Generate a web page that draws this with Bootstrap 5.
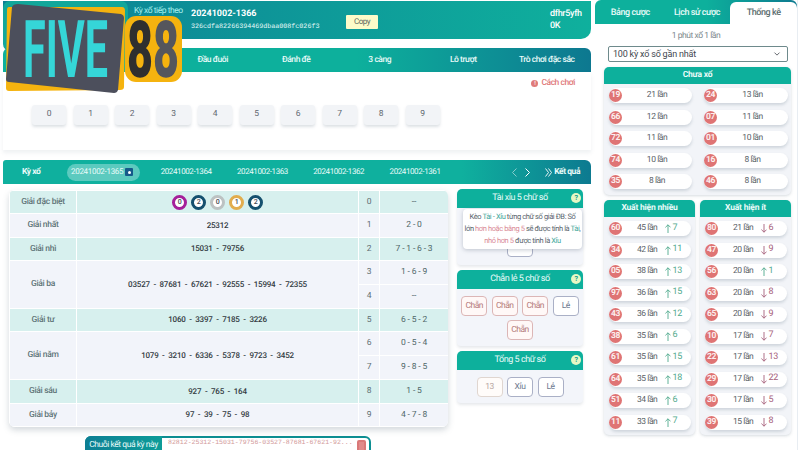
<!DOCTYPE html>
<html lang="vi">
<head>
  <meta charset="UTF-8" />
  <meta name="viewport" content="width=device-width, initial-scale=1" />
  <title>Five88 Xổ số</title>
  <link href="https://cdn.jsdelivr.net/npm/bootstrap@5.3.3/dist/css/bootstrap.min.css" rel="stylesheet" />
  <style>
    html, body { height: 450px; overflow: hidden; }
    body { font-family: Roboto, "Liberation Sans", sans-serif; font-size: 8.5px; letter-spacing: -.45px; text-rendering: geometricPrecision; color: #4c5660; background: #fff; position: relative; }
    .khung-trai { width: 588px; margin-left: 3px; padding-top: 1px; }
    .khung-phai { width: 203px; margin-left: 4px; border-right: 1px solid #e8edf2; height: 450px; }

    .ky-tiep { height: 38px; border-radius: 0 0 10px 10px; background: linear-gradient(90deg, #0d7f94, #0fb09d); color: #fff; padding-left: 131px; }
    .ky-nhan { width: 57px; color: #a8f0ee; }
    .ky-ma { font-weight: 700; font-size: 9px; line-height: 13px; letter-spacing: 0; }
    .ky-hash { font-family: "Liberation Mono", monospace; font-size: 6.7px; line-height: 12px; letter-spacing: 0; color: #e6fbfa; width: 155px; }
    .nut-copy { width: 32px; height: 14px; line-height: 14px; background: #fdfbc9; color: #5c6a5e; font-size: 8px; border-radius: 1px; text-align: center; margin-top: 3px; }
    .ky-user { width: 41px; font-weight: 500; line-height: 12px; font-size: 9px; letter-spacing: -.3px; }

    .thanh-tab { height: 24px; margin-top: 9px; padding-left: 1px; background: linear-gradient(90deg, #0db09c 60%, #0d7890); border-radius: 6px 6px 0 0; color: #e9fbf9; }
    .thanh-tab > div { width: 83.5px; text-align: center; font-weight: 500; }
    .vung-so { height: 78px; box-shadow: 0 3px 4px rgba(120, 140, 160, .12); }
    .cach-choi { height: 22px; padding-right: 16px; color: #e07a7a; font-weight: 500; gap: 3px; }
    .dot-do { width: 7px; height: 7px; border-radius: 50%; background: #e07a7a; color: #fff; font-size: 6px; line-height: 7px; text-align: center; }
    .hang-so { padding: 11px 0 0 29px; gap: 7.5px; }
    .o-so { width: 34px; height: 20px; line-height: 19px; text-align: center; background: #f2f4f7; border-radius: 3px; box-shadow: 0 2px 3px rgba(120, 135, 150, .25); color: #5f6770; }

    .thanh-ky { height: 24px; margin-top: 10px; background: linear-gradient(90deg, #0fb09e 78%, #0d7a90); color: #e9fbf9; border-radius: 3px 6px 0 0; position: relative; }
    .thanh-ky .ten-ky { width: 64px; padding-left: 19px; font-weight: 700; }
    .ky-chon { width: 73px; height: 17px; border-radius: 9px; background: #5ccabf; padding-left: 4px; gap: 2px; white-space: nowrap; font-size: 8px; letter-spacing: -.3px; }
    .vuong-xanh { width: 8px; height: 8px; background: #155a8a; border-radius: 1px; display: flex; align-items: center; justify-content: center; }
    .vuong-xanh i { width: 3px; height: 3px; background: #fff; border-radius: 50%; }
    .ky-khac { width: 76.3px; text-align: center; white-space: nowrap; font-size: 8px; letter-spacing: -.4px; }
    .mui-ten { margin-left: 59px; width: 33px; gap: 8px; }
    .ket-qua { font-weight: 700; gap: 2px; }

    .kq-wrap { width: 439px; margin: 6px 0 0 6px; border-radius: 6px; overflow: hidden; box-shadow: 0 3px 6px rgba(110, 125, 140, .3); align-self: flex-start; }
    .kq-table { table-layout: fixed; border-collapse: collapse; font-size: 8.5px; }
    .kq-table td { padding: 0; text-align: center; vertical-align: middle; background: #f2f4fa; color: #3f4850; border: 1px solid #fff; }
    .kq-table tr.hang-dam td { background: #d7f0ee; }
    .kq-table td.o-nhan { color: #5f7478; font-weight: 500; letter-spacing: -.3px; }
    .kq-table td.o-giai { font-weight: 500; font-size: 8px; letter-spacing: -.2px; color: #333b42; }
    .kq-table td.o-dau { color: #5f6e72; }
    .kq-table td.o-duoi { color: #4f6668; letter-spacing: -.15px; }
    .bi { display: inline-block; width: 15px; height: 15px; border-radius: 50%; border: 3px solid #15506e; background: #fff; line-height: 9px; font-size: 7px; font-weight: 500; margin: 0 2px; vertical-align: middle; }
    .bi-tim { border-color: #a5209a; }
    .bi-xam { border-color: #bcc2c2; }
    .bi-vang { border-color: #e2ad4e; }

    .cot-phu { width: 126px; margin: 5px 0 0 9px; gap: 5px; }
    .hop-phu { background: #f3f5fa; border-radius: 6px 6px 4px 4px; box-shadow: 0 2px 3px rgba(120, 135, 150, .18); position: relative; }
    .dau-phu { height: 19px; background: #0db09c; color: #e9fbf9; border-radius: 5px 5px 0 0; font-size: 9px; position: relative; }
    .hoi { position: absolute; right: 2px; top: 4px; width: 10px; height: 10px; border-radius: 50%; background: #e6f8c4; color: #0d9c8c; font-size: 7px; line-height: 10px; text-align: center; font-weight: 700; }
    .than-phu { padding: 7px 4px; gap: 4px 4.5px; }
    .the { width: 26px; height: 20px; line-height: 18px; text-align: center; background: #fff; border: 1px solid #aab0c6; border-radius: 4px; color: #6e7a90; }
    .the-do { border-color: #dcb6b6; color: #b47a7a; background: #fff8f7; }
    .the-nhat { border-color: #e0d6d0; color: #b9a8a4; background: #fffcfa; }
    .the-khuat { height: 12px; margin-top: 37px; }
    .chu-thich { position: absolute; left: 6px; top: 20px; width: 119px; height: 40px; background: #fff; border-radius: 4px; box-shadow: 0 1px 4px rgba(90, 100, 120, .35); text-align: center; font-size: 7.5px; line-height: 12px; padding: 2px 0; letter-spacing: -.4px; color: #59646c; white-space: nowrap; }
    .chu-thich .xanh { color: #3fa79a; }
    .chu-thich .hong { color: #d98a96; }

    .chuoi { width: 286px; height: 24px; margin: 9px 0 0 82px; border: 2px solid #0d8f92; border-radius: 6px 6px 0 0; background: #fff; }
    .chuoi-ten { width: 77px; height: 100%; margin: -2px 0 0 -2px; padding-top: 3px; text-align: center; background: linear-gradient(90deg, #0d7f94, #0d9c98); color: #e9fbf9; white-space: nowrap; border-radius: 6px 0 0 0; }
    .chuoi-so { font-family: "Liberation Mono", monospace; font-size: 6.55px; letter-spacing: 0; color: #d29a9a; margin-left: 6px; white-space: nowrap; width: 184px; overflow: hidden; }
    .thung { width: 9px; height: 12px; background: #e08a8a; border: 2px solid #d97878; border-radius: 2px; margin: 2px 0 0 5px; }

    .tab-phai { height: 24px; background: linear-gradient(90deg, #0db09c 55%, #0d7a90); border-radius: 6px 6px 0 0; color: #e9fbf9; padding-left: 2px; align-items: flex-end; }
    .tab-phai > div { width: 67px; height: 22px; line-height: 22px; text-align: center; font-size: 9px; font-weight: 500; }
    .tab-phai > .dang-mo { background: #fff; color: #5c6e70; border-radius: 6px 6px 0 0; }
    .moi-phut { height: 22px; line-height: 25px; text-align: center; color: #7c878c; }
    .chon-ky { width: 180px; height: 16px; margin-left: 13px; padding: 0 4px; font-size: 9px; line-height: 14px; background-color: #fff; background-position: right 6px center; background-size: 8px 6px; border: 1px solid #6e8a8c; border-radius: 2px; color: #3f474e; letter-spacing: -.2px; }
    .hop-tk { background: #f2f4f8; border-radius: 5px; box-shadow: 0 1px 3px rgba(120, 135, 150, .3); }
    .dau-tk { height: 17px; line-height: 17px; text-align: center; background: #0db09c; color: #e9fbf9; font-weight: 700; letter-spacing: -.2px; border-radius: 5px 5px 0 0; }
    .tk-tren { width: 187px; margin: 5px 0 0 9px; height: 128px; }
    .tk-duoi { margin: 5px 0 0 9px; gap: 5px; }
    .tk-duoi .hop-tk { width: 91px; height: 235px; }
    .luoi-tk { display: grid; grid-template-columns: 83px 84px; gap: 6.5px 12px; padding: 4px 0 0 5px; }
    .luoi-don { display: grid; gap: 6.5px; padding: 4px 0 0 5px; }
    .vien { width: 82px; height: 15px; background: #fff; border-radius: 8px; box-shadow: 0 2px 3px rgba(120, 135, 150, .28); position: relative; display: flex; align-items: center; color: #5a6268; }
    .luoi-tk .vien { width: auto; }
    .vien b { width: 13px; height: 13px; line-height: 13px; border-radius: 50%; background: #df7474; color: #fbeeee; text-align: center; font-size: 8.5px; letter-spacing: -.3px; font-weight: 700; flex: none; }
    .vien .lan { flex: 1; text-align: center; }
    .vien .lan2 { width: 20px; margin-left: 15px; text-align: center; white-space: nowrap; }
    .vien .len, .vien .xuong { display: flex; align-items: center; gap: 1.5px; margin-left: 8px; white-space: nowrap; font-size: 9px; letter-spacing: -.2px; }
    .vien .len { color: #4fa98c; }
    .vien .xuong { color: #a6607a; }

    .logo { position: absolute; left: 0; top: 0; width: 190px; height: 96px; }
  </style>
</head>
<body>
  <div class="d-flex">
    <!-- Cot trai -->
    <div class="khung-trai">
      <div class="ky-tiep d-flex align-items-center">
        <div class="ky-nhan align-self-start pt-1">Kỳ xổ tiếp theo</div>
        <div style="width:155px">
          <div class="ky-ma">20241002-1366</div>
          <div class="ky-hash">326cdfa82266394469dbaa008fc026f3</div>
        </div>
        <div class="nut-copy">Copy</div>
        <div class="ms-auto ky-user">dfhr5yfh<br>0K</div>
      </div>

      <div class="thanh-tab d-flex align-items-center">
        <div></div><div></div><div>Đầu đuôi</div><div>Đánh đề</div><div>3 càng</div><div>Lô trượt</div><div>Trò chơi đặc sắc</div>
      </div>

      <div class="vung-so">
        <div class="cach-choi d-flex align-items-center justify-content-end"><span class="dot-do">!</span>Cách chơi</div>
        <div class="hang-so d-flex">
          <div class="o-so">0</div><div class="o-so">1</div><div class="o-so">2</div><div class="o-so">3</div><div class="o-so">4</div>
          <div class="o-so">5</div><div class="o-so">6</div><div class="o-so">7</div><div class="o-so">8</div><div class="o-so">9</div>
        </div>
      </div>

      <div class="thanh-ky d-flex align-items-center">
        <div class="ten-ky">Kỳ xổ</div>
        <div class="ky-chon d-flex align-items-center">20241002-1365<span class="vuong-xanh"><i></i></span></div>
        <div class="ky-khac ms-2">20241002-1364</div>
        <div class="ky-khac">20241002-1363</div>
        <div class="ky-khac">20241002-1362</div>
        <div class="ky-khac">20241002-1361</div>
        <div class="mui-ten d-flex align-items-center">
          <svg width="5" height="9" viewBox="0 0 5 9" class="opacity-50"><path d="M4.5 .5 L.5 4.5 L4.5 8.5" fill="none" stroke="#fff" /></svg>
          <svg width="5" height="9" viewBox="0 0 5 9"><path d="M.5 .5 L4.5 4.5 L.5 8.5" fill="none" stroke="#fff" /></svg>
        </div>
        <div class="ket-qua d-flex align-items-center">
          <svg width="7" height="9" viewBox="0 0 7 9"><path d="M.5 .5 L3.5 4.5 L.5 8.5 M3.5 .5 L6.5 4.5 L3.5 8.5" fill="none" stroke="#fff" stroke-width=".9" /></svg>Kết quả
        </div>
      </div>

      <div class="d-flex">
        <div class="kq-wrap">
          <table class="table table-borderless mb-0 kq-table">
            <colgroup><col style="width:67px"><col style="width:282px"><col style="width:21px"><col style="width:69px"></colgroup>
            <tbody>
              <tr class="hang-dam" style="height:23px"><td class="o-nhan">Giải đặc biệt</td><td><span class="bi bi-tim">0</span><span class="bi">2</span><span class="bi bi-xam">0</span><span class="bi bi-vang">1</span><span class="bi">2</span></td><td class="o-dau">0</td><td class="o-duoi">--</td></tr>
              <tr style="height:24px"><td class="o-nhan">Giải nhất</td><td class="o-giai">25312</td><td class="o-dau">1</td><td class="o-duoi">2 - 0</td></tr>
              <tr class="hang-dam" style="height:23px"><td class="o-nhan">Giải nhì</td><td class="o-giai">15031 &nbsp;-&nbsp; 79756</td><td class="o-dau">2</td><td class="o-duoi">7 - 1 - 6 - 3</td></tr>
              <tr style="height:24px"><td class="o-nhan" rowspan="2">Giải ba</td><td class="o-giai" rowspan="2">03527 &nbsp;-&nbsp; 87681 &nbsp;-&nbsp; 67621 &nbsp;-&nbsp; 92555 &nbsp;-&nbsp; 15994 &nbsp;-&nbsp; 72355</td><td class="o-dau">3</td><td class="o-duoi">1 - 6 - 9</td></tr>
              <tr style="height:24px"><td class="o-dau">4</td><td class="o-duoi">--</td></tr>
              <tr class="hang-dam" style="height:23px"><td class="o-nhan">Giải tư</td><td class="o-giai">1060 &nbsp;-&nbsp; 3397 &nbsp;-&nbsp; 7185 &nbsp;-&nbsp; 3226</td><td class="o-dau">5</td><td class="o-duoi">6 - 5 - 2</td></tr>
              <tr style="height:24px"><td class="o-nhan" rowspan="2">Giải năm</td><td class="o-giai" rowspan="2">1079 &nbsp;-&nbsp; 3210 &nbsp;-&nbsp; 6336 &nbsp;-&nbsp; 5378 &nbsp;-&nbsp; 9723 &nbsp;-&nbsp; 3452</td><td class="o-dau">6</td><td class="o-duoi">0 - 5 - 4</td></tr>
              <tr style="height:24px"><td class="o-dau">7</td><td class="o-duoi">9 - 8 - 5</td></tr>
              <tr class="hang-dam" style="height:24px"><td class="o-nhan">Giải sáu</td><td class="o-giai">927 &nbsp;-&nbsp; 765 &nbsp;-&nbsp; 164</td><td class="o-dau">8</td><td class="o-duoi">1 - 5</td></tr>
              <tr style="height:23px"><td class="o-nhan">Giải bảy</td><td class="o-giai">97 &nbsp;-&nbsp; 39 &nbsp;-&nbsp; 75 &nbsp;-&nbsp; 98</td><td class="o-dau">9</td><td class="o-duoi">4 - 7 - 8</td></tr>
            </tbody>
          </table>
        </div>

        <div class="cot-phu d-flex flex-column">
          <div class="hop-phu" style="height:76px">
            <div class="dau-phu d-flex align-items-center justify-content-center">Tài xỉu 5 chữ số<span class="hoi">?</span></div>
            <div class="d-flex justify-content-center"><div class="the the-khuat"></div></div>
            <div class="chu-thich">Kèo <span class="xanh">Tài - Xỉu</span> từng chữ số giải ĐB: Số<br>lớn <span class="hong">hơn hoặc bằng 5</span> sẽ được tính là <span class="xanh">Tài</span>,<br><span class="hong">nhỏ hơn 5</span> được tính là <span class="xanh">Xỉu</span></div>
          </div>
          <div class="hop-phu" style="height:76px">
            <div class="dau-phu d-flex align-items-center justify-content-center">Chẵn lẻ 5 chữ số<span class="hoi">?</span></div>
            <div class="than-phu d-flex flex-wrap justify-content-center">
              <div class="the the-do">Chẵn</div><div class="the the-do">Chẵn</div><div class="the the-do">Chẵn</div><div class="the">Lẻ</div><div class="the the-do">Chẵn</div>
            </div>
          </div>
          <div class="hop-phu" style="height:52px">
            <div class="dau-phu d-flex align-items-center justify-content-center">Tổng 5 chữ số<span class="hoi">?</span></div>
            <div class="than-phu d-flex justify-content-center">
              <div class="the the-nhat">13</div><div class="the">Xỉu</div><div class="the">Lẻ</div>
            </div>
          </div>
        </div>
      </div>

      <div class="chuoi d-flex align-items-start">
        <div class="chuoi-ten">Chuỗi kết quả kỳ này</div>
        <div class="chuoi-so">82812-25312-15031-79756-03527-87681-67621-92...</div>
        <div class="thung"></div>
      </div>
    </div>

    <!-- Cot phai -->
    <div class="khung-phai">
      <div class="tab-phai d-flex">
        <div>Bảng cược</div><div>Lịch sử cược</div><div class="dang-mo">Thống kê</div>
      </div>
      <div class="moi-phut">1 phút xổ 1 lần</div>
      <select class="form-select chon-ky"><option>100 kỳ xổ số gần nhất</option></select>

      <div class="hop-tk tk-tren">
        <div class="dau-tk">Chưa xổ</div>
        <div class="luoi-tk" id="chuaXo"></div>
      </div>

      <div class="tk-duoi d-flex">
        <div class="hop-tk">
          <div class="dau-tk">Xuất hiện nhiều</div>
          <div class="luoi-don" id="nhieu"></div>
        </div>
        <div class="hop-tk">
          <div class="dau-tk">Xuất hiện ít</div>
          <div class="luoi-don" id="it"></div>
        </div>
      </div>
    </div>
  </div>

  <!-- Logo nam de len tren thanh dau trang -->
  <svg class="logo" viewBox="0 0 190 96" role="img" aria-label="FIVE88">
    <rect x="3" y="1" width="125" height="50" rx="7" fill="#12a79a" />
    <path d="M9 7 L122 7 Q125 7 125 11 L124 87 Q124 90 120 90 L9 91 Q6 91 6 88 L7 10 Q7 7 9 7Z" fill="#f5b30f" />
    <rect x="125" y="16" width="57" height="66" rx="11" fill="#f5b30f" />
    <path d="M18 4 L121 14 Q124 15 124 18 L118 90 Q117 93 114 93 L9 82 Q6 82 6 79 L12 7 Q13 4 18 4Z" fill="#4c4f5c" />
    <text x="23" y="77" font-family="Roboto, sans-serif" font-weight="700" font-size="80" letter-spacing="0" fill="#35d6d8" textLength="85" lengthAdjust="spacingAndGlyphs">FIVE</text>
    <text x="127" y="77" font-family="Roboto, sans-serif" font-weight="900" font-size="79" letter-spacing="0" textLength="52" lengthAdjust="spacingAndGlyphs"><tspan fill="#2f2f2f">8</tspan><tspan fill="#55565c">8</tspan></text>
  </svg>

  <script>
    // du lieu thong ke ben phai
    const chuaXo = [['19',21],['24',13],['66',12],['07',11],['72',11],['01',10],['74',10],['16',8],['35',8],['46',8]];
    const nhieu = [['60',45,7],['34',42,11],['05',38,13],['97',36,15],['43',36,12],['38',35,6],['61',35,15],['64',35,18],['51',34,6],['11',33,7]];
    const it = [['80',21,-6],['47',20,-9],['56',20,1],['63',20,-8],['65',20,-9],['10',17,-7],['22',17,-13],['29',17,-22],['30',17,-5],['39',15,-8]];

    const muiLen = '<svg width="6" height="9" viewBox="0 0 6 9"><path d="M3 9 V.8 M.4 3.4 L3 .8 L5.6 3.4" fill="none" stroke="currentColor" stroke-width=".9"/></svg>';
    const muiXuong = '<svg width="6" height="9" viewBox="0 0 6 9"><path d="M3 0 V8.2 M.4 5.6 L3 8.2 L5.6 5.6" fill="none" stroke="currentColor" stroke-width=".9"/></svg>';

    document.getElementById('chuaXo').innerHTML = chuaXo.map(r =>
      `<div class="vien"><b>${r[0]}</b><span class="lan">${r[1]} lần</span></div>`).join('');

    function dongDoi(r) {
      const lop = r[2] > 0 ? 'len' : 'xuong';
      const mui = r[2] > 0 ? muiLen : muiXuong;
      return `<div class="vien"><b>${r[0]}</b><span class="lan2">${r[1]} lần</span><span class="${lop}">${mui}${Math.abs(r[2])}</span></div>`;
    }
    document.getElementById('nhieu').innerHTML = nhieu.map(dongDoi).join('');
    document.getElementById('it').innerHTML = it.map(dongDoi).join('');
  </script>
  <script src="https://cdn.jsdelivr.net/npm/bootstrap@5.3.3/dist/js/bootstrap.bundle.min.js"></script>
</body>
</html>
